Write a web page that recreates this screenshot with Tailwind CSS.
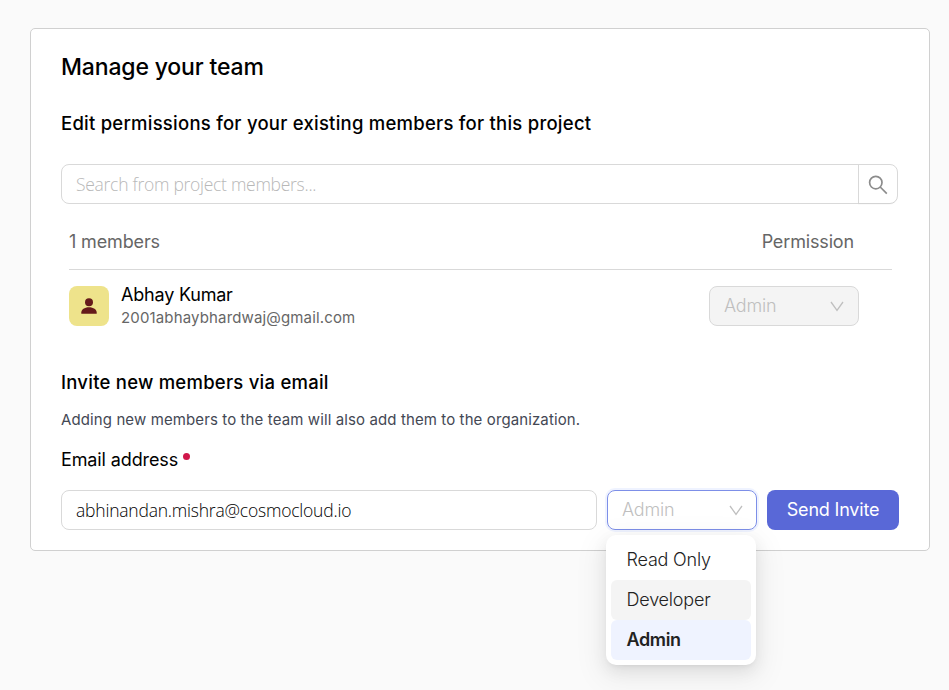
<!DOCTYPE html>
<html lang="en">
<head>
<meta charset="utf-8">
<title>Manage your team</title>
<script src="https://cdn.jsdelivr.net/npm/@tailwindcss/browser@4"></script>
</head>
<body class="h-[690px] overflow-hidden bg-[#fafafa] pt-7 pl-[30px] font-['Inter',sans-serif] text-black">
<main class="h-[523px] w-[900px] rounded-[5px] border border-[#d0d0d0] bg-white pt-[22px] pl-[30px] whitespace-nowrap">
  <h1 class="h-8 text-[23px] leading-8 font-medium tracking-[-0.16px]">Manage your team</h1>
  <h2 class="mt-[28px] h-6 text-[18.5px] leading-6 font-medium tracking-[0.24px]">Edit permissions for your existing members for this project</h2>
  <div class="mt-[29px] flex h-10 w-[837px] rounded-lg border border-[#d9d9d9]">
    <div class="flex-1 pl-3.5 font-['Open_Sans',sans-serif] text-[17.5px] leading-[39px] font-light tracking-[-0.28px] text-[#b8b8b8]">Search from project members...</div>
    <button aria-label="Search" class="flex w-[39px] items-center justify-center rounded-r-lg border-l border-[#d9d9d9] text-[#8c8c8c] shadow-[0_2px_0_rgba(0,0,0,0.02)]">
      <svg class="mt-px size-5" viewBox="0 0 20 20" fill="none" stroke="currentColor" stroke-width="1.7"><circle cx="7.8" cy="7.6" r="6.2"/><path d="M12.2 12l6.6 6.6"/></svg>
    </button>
  </div>
  <section class="ml-2 w-[823px]">
    <div class="flex h-[66px] justify-between border-b border-[#d9d9d9] pt-[26px] pr-[38px] text-lg leading-6 tracking-[-0.15px] text-[#666]"><span>1 members</span><span>Permission</span></div>
    <div class="flex pt-4">
      <div class="flex size-10 items-center justify-center rounded-lg bg-[#eee38b] text-[#651a1a]">
        <svg class="size-4" viewBox="0 0 16 16" fill="currentColor"><circle cx="8" cy="4.2" r="4"/><path d="M.3 15.7v-1.2C.3 11.500 3.500 9.200 8 9.200s7.700 2.300 7.700 5.300v1.200z"/></svg>
      </div>
      <div class="ml-3 flex-1">
        <div class="-mt-[3px] h-[25px] text-lg leading-6 tracking-[-0.2px]">Abhay Kumar</div>
        <div class="h-5 text-[15px] leading-5 tracking-[0.15px] text-[#666]">2001abhaybhardwaj@gmail.com</div>
      </div>
      <div class="mr-[33px] flex h-10 w-[150px] items-center justify-between rounded-lg border border-[#d9d9d9] bg-[#f4f4f4] px-3.5 text-lg font-light tracking-[-0.2px] text-[#bfbfbf]"><span>Admin</span>
        <svg class="size-3.5" viewBox="0 0 14 14" fill="none" stroke="currentColor" stroke-width="1.3"><path d="M1 3l6 8.300 6-8.300"/></svg>
      </div>
    </div>
  </section>
  <h2 class="mt-[42px] h-6 text-[18.5px] leading-6 font-medium tracking-[0.24px]">Invite new members via email</h2>
  <p class="mt-4 h-5 text-[15px] leading-5 tracking-[0.11px] text-[#444854]">Adding new members to the team will also add them to the organization.</p>
  <div class="mt-[18px] flex h-6 text-lg leading-6"><span class="tracking-[-0.12px]">Email address</span><i class="mt-[5px] ml-[5px] size-[7px] rounded-full bg-[#d0174a]"></i></div>
  <div class="mt-[18px] flex gap-2.5 text-lg">
    <div class="h-10 w-[536px] rounded-lg border border-[#d9d9d9] pl-3.5 font-['Open_Sans',sans-serif] text-[17.5px] leading-[39px] font-light tracking-[-0.21px] text-black">abhinandan.mishra@cosmocloud.io</div>
    <div class="relative flex h-10 w-[150px] items-center justify-between rounded-lg border border-[#7d8fe8] pr-[13px] pl-3.5 font-light tracking-[-0.2px] text-[#bfbfbf] shadow-[0_0_0_2px_#eff3ff]"><span>Admin</span>
      <svg class="size-3.5" viewBox="0 0 14 14" fill="none" stroke="currentColor" stroke-width="1.3"><path d="M1 3l6 8.300 6-8.300"/></svg>
      <ul class="absolute top-11 -left-0.5 h-[130px] w-[150px] rounded-[10px] bg-white p-[5px] leading-10 text-[#222] shadow-[0_6px_16px_rgba(0,0,0,0.08),0_3px_6px_-4px_rgba(0,0,0,0.12),0_9px_28px_8px_rgba(0,0,0,0.05)]">
        <li class="h-10 rounded-md pl-[15.5px]">Read Only</li>
        <li class="h-10 rounded-md bg-[#f4f4f4] pl-[15.5px]">Developer</li>
        <li class="h-10 rounded-md bg-[#eff3ff] pl-[15.5px] font-semibold tracking-[-0.35px]">Admin</li>
      </ul>
    </div>
    <button class="h-10 w-[132px] rounded-lg bg-[#5968d7] tracking-[-0.2px] text-white">Send Invite</button>
  </div>
</main>
</body>
</html>
